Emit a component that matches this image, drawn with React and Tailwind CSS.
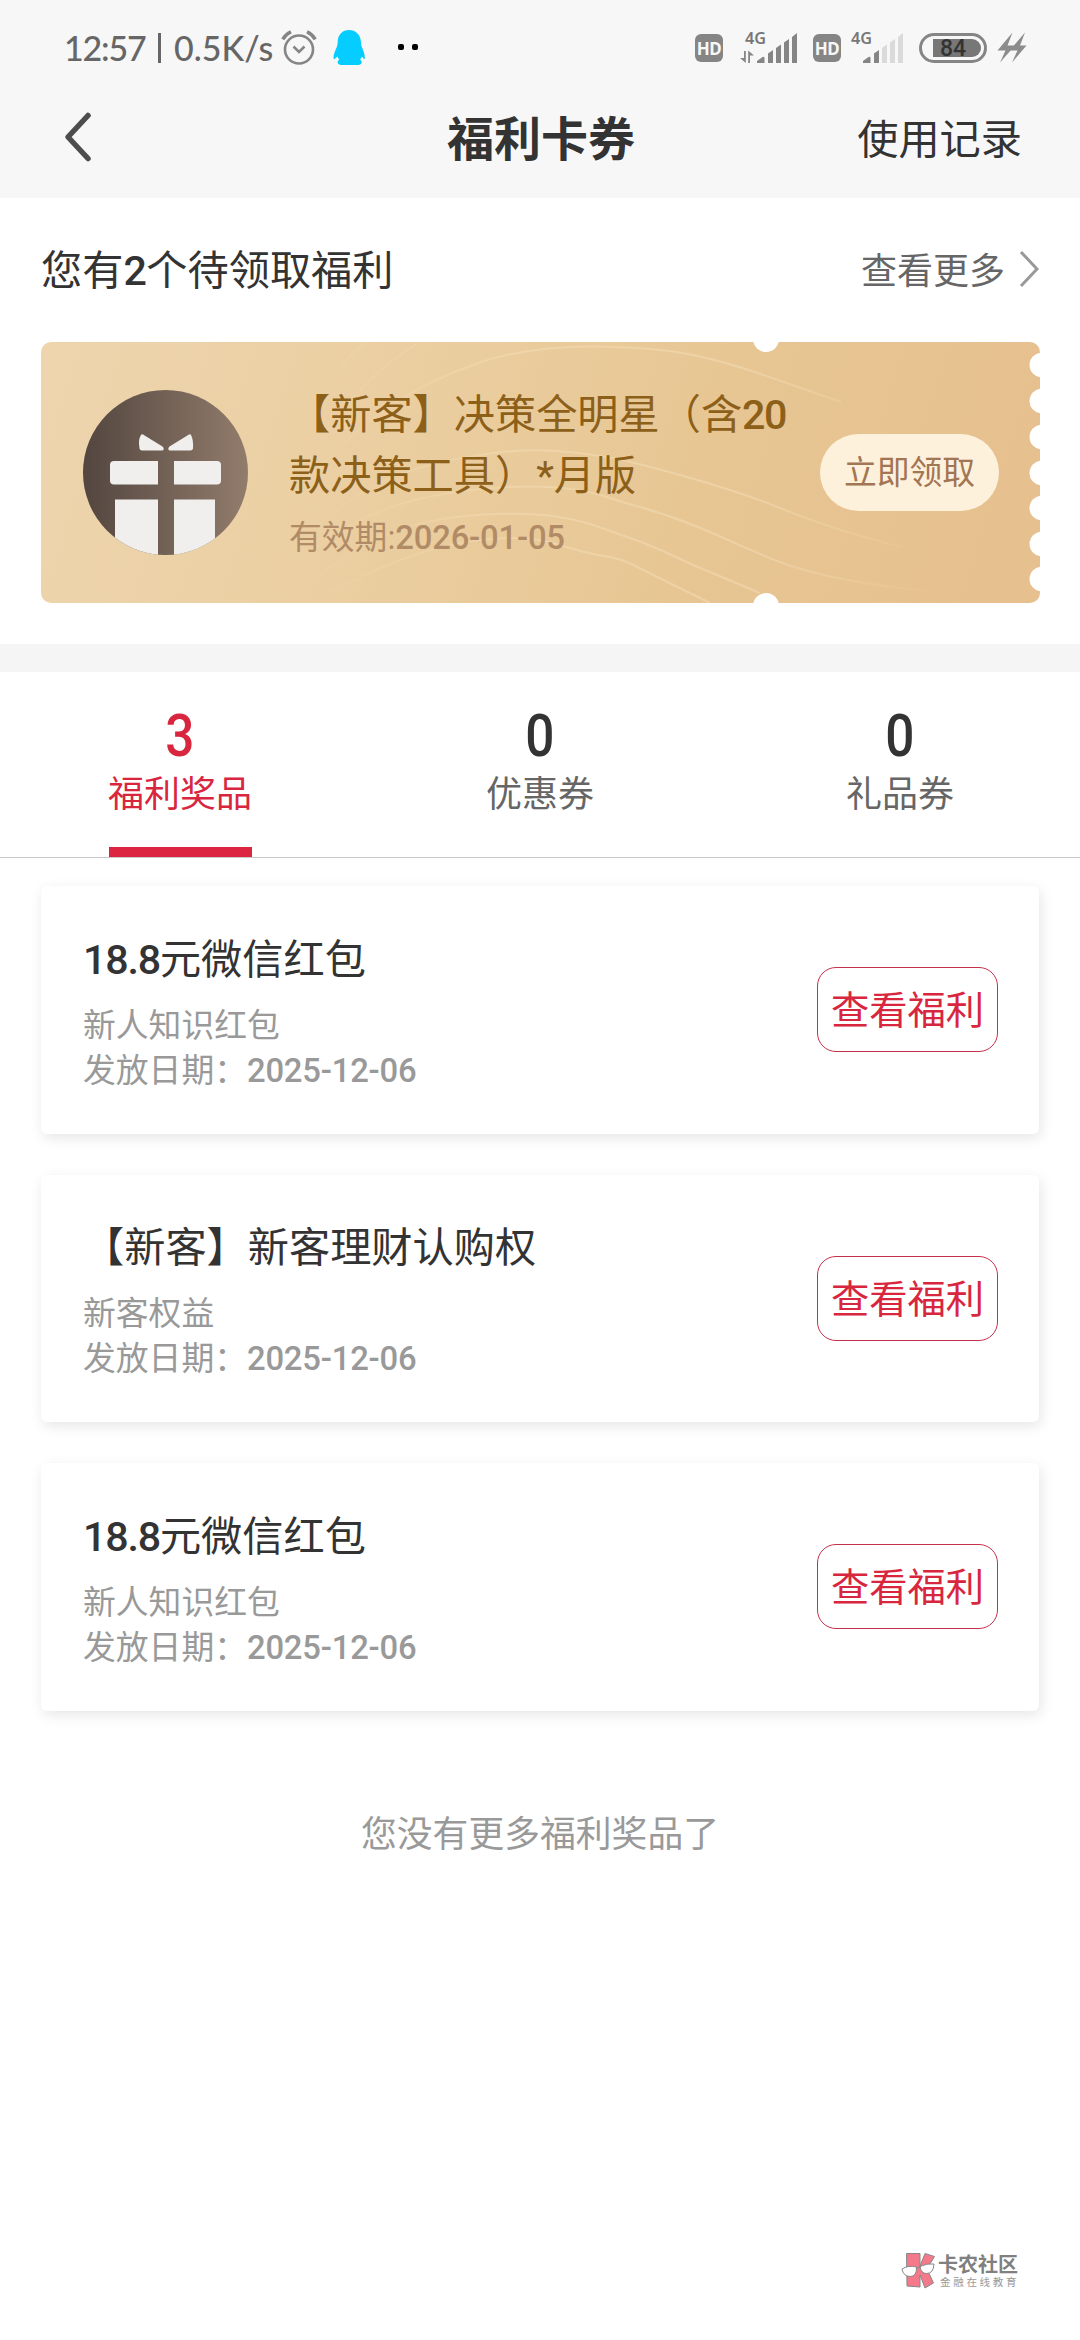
import React from "react";

const prizes = [
  { id: 1, amount: "18.8", title: "元微信红包", source: "新人知识红包", date: "2025-12-06" },
  { id: 2, amount: "", title: "【新客】新客理财认购权", source: "新客权益", date: "2025-12-06" },
  { id: 3, amount: "18.8", title: "元微信红包", source: "新人知识红包", date: "2025-12-06" },
];

const tabs = [
  { label: "福利奖品", count: 3, active: true },
  { label: "优惠券", count: 0, active: false },
  { label: "礼品券", count: 0, active: false },
];

const EDGE_NOTCHES = [23, 59, 95, 131, 166, 202, 237];

const HdBadge = () => (
  <div className="w-7 h-7 rounded-[6px] bg-[#858585] text-[#f7f7f7] text-[17px] leading-[30px] font-bold text-center tracking-[-0.5px] font-['Noto_Sans',sans-serif]">
    HD
  </div>
);

const Signal = ({ strength, arrows }) => (
  <svg width="62" height="54" viewBox="0 -10 62 54" className="block">
    <text x="5" y="13.5" fontSize="15.5" fontWeight="600" fontFamily="Noto Sans, sans-serif" fill="#777" textLength="21" lengthAdjust="spacingAndGlyphs">4G</text>
    {arrows && (
      <g fill="#858585">
        <path d="M4 21h1.8v12L0 28h4z" />
        <path d="M8.2 33H10V25.600h4L8.200 20.600z" />
      </g>
    )}
    {[
      "M17 33v-2l5.5-4q2-1 2 1v5z",
      "M28 33V23.500l5-3.500v13z",
      "M36 33V18l5-3.500V33z",
      "M44 33V12.500L49 9v24z",
      "M52 33V7l5-4v30z",
    ].map((d, i) => (
      <path key={d} d={d} fill={i < strength ? "#858585" : "#dadada"} />
    ))}
  </svg>
);

const StatusBar = () => (
  <div className="h-[92px] pl-[64px] pr-[53px] flex items-center justify-between">
    <div className="flex items-center pt-1">
      <div className="w-[210px] flex items-center text-[34px] leading-[40px] font-medium text-[#666] font-['Lato',sans-serif] whitespace-pre">
        <span className="w-[84px] tracking-[-1.2px]">12:57</span>
        <span className="w-[3px] h-[30px] ml-[10px] mr-[13px] bg-[#666]" />
        <span>0.5K/s</span>
      </div>
      <svg width="36" height="36" viewBox="0 0 36 36" fill="none" stroke="#858585" strokeWidth="2.600" className="ml-[7px]">
        <circle cx="18" cy="19.500" r="14" />
        <path d="M12.500 16.500l5.500 5.500 5.500-5.500" />
        <path d="M1.800 9.300Q4.500 4.500 10 1.800M34.200 9.300Q31.500 4.500 26 1.800" strokeWidth="3.500" />
      </svg>
      <svg width="32" height="36" viewBox="0 0 32 36" className="ml-[16px]" fill="#06cdff">
        <path d="M16 0C9.500 0 5 4.500 4.700 11.500c0 2-.3 3-.7 5C2.500 20 .5 24 .5 27.500c0 1.800.8 2 1.800 1l2.200-2c.4 1.300 1 2.400 1.800 3.300-1 .7-1.600 1.400-1.600 2.300 0 1.600.6 2.300 2.300 2.300V35h19.500v-.6c1.500 0 2.200-.8 2.200-2.300 0-.9-.6-1.600-1.600-2.300.8-.9 1.400-2 1.800-3.300l1.500 2c.8 1 1.400.7 1.400-1 0-3.500-1.600-7.500-3.200-11-.4-2-.6-3-.7-5C27.500 4.500 22.500 0 16 0z" />
      </svg>
      <div className="ml-[33px] flex gap-2 pb-[2px]">
        <span className="w-[6px] h-[6px] rounded-[2px] bg-black" />
        <span className="w-[6px] h-[6px] rounded-[2px] bg-black" />
      </div>
    </div>

    <div className="flex items-center pt-1">
      <HdBadge />
      <div className="ml-[17px] mb-[2px]"><Signal strength={5} arrows /></div>
      <div className="ml-[11px]"><HdBadge /></div>
      <div className="ml-[5px] mb-[2px]"><Signal strength={2} /></div>
      <div className="ml-[11px] w-[68px] h-[30px] rounded-full border-[3px] border-[#858585] p-[3px] pl-[11px]">
        <div className="h-[18px] w-[48px] rounded-l-[2px] rounded-r-full bg-[#777] text-[#333] text-[23px] leading-[19px] font-medium pl-[7px] font-['Roboto',sans-serif]">
          84
        </div>
      </div>
      <svg width="30" height="32" viewBox="0 0 30 32" fill="#8c8c8c" className="ml-[10px]">
        <path d="M15.500 .5L.5 18.500h8L3 30.500l15-17h-7.500z" />
        <path d="M28 .5L12.500 18.500h8L15 30.500l14.500-17H23z" />
      </svg>
    </div>
  </div>
);

const GiftIcon = () => (
  <svg width="165" height="165" viewBox="0 0 165 165" className="block shrink-0">
    <defs>
      <linearGradient id="giftBg" x1="0" x2="1" y1="0" y2="0">
        <stop offset="0" stopColor="#53463f" />
        <stop offset="1" stopColor="#927c6c" />
      </linearGradient>
      <clipPath id="giftClip">
        <circle cx="82.500" cy="82.500" r="82.500" />
      </clipPath>
    </defs>
    <g clipPath="url(#giftClip)">
      <rect width="165" height="165" fill="url(#giftBg)" />
      <g fill="#f0efee">
        <path d="M60 44.500q-1.500-1-2.200.8Q55 50 56.500 58.500q.4 2 2.500 2h20.500q2.500-1.500 0-4z" />
        <path d="M106 44.500q1.500-1 2.200.8 2.300 5 1.800 13.200-.4 2-2.500 2H86.500q-2.500-1.500 0-4z" />
        <path d="M31 71h44v23.500H31q-4 0-4-4V75q0-4 4-4z" />
        <path d="M91 71h43q4 0 4 4v15.500q0 4-4 4H91z" />
        <path d="M32 109.500h43V165H32zM91 109.500h41V165H91z" />
      </g>
    </g>
  </svg>
);

const CouponBackground = () => (
  <svg width="999" height="261" viewBox="0 0 999 261" className="absolute inset-0">
    <defs>
      <linearGradient id="couponBg" x1="0" x2="1" y1="0" y2="0.080">
        <stop offset="0" stopColor="#eed5ae" />
        <stop offset="0.350" stopColor="#ebcfa2" />
        <stop offset="0.700" stopColor="#e7c693" />
        <stop offset="1" stopColor="#e6c18f" />
      </linearGradient>
      <linearGradient id="waveFade" gradientUnits="userSpaceOnUse" x1="240" x2="900" y1="0" y2="0">
        <stop offset="0" stopColor="#f3dcb5" stopOpacity="0" />
        <stop offset="0.350" stopColor="#f3dcb5" stopOpacity="0.550" />
        <stop offset="0.700" stopColor="#f3dcb5" stopOpacity="0.550" />
        <stop offset="1" stopColor="#f3dcb5" stopOpacity="0" />
      </linearGradient>
    </defs>
    <rect width="999" height="261" rx="10" fill="url(#couponBg)" />
    <g fill="none" stroke="url(#waveFade)" strokeWidth="2">
      <path d="M250 160C320 70 386 38 440 20S560 2 620 8 740 40 800 60" />
      <path d="M250 90Q290 30 325 0M280 100Q320 35 376 2" />
      <path d="M270 190C330 130 400 118 452 111S560 112 602 123 700 150 739 166 820 195 860 205" />
      <path d="M270 210C330 160 400 150 452 146S540 146 569 156 610 166 652 183 700 205 739 220 830 244 900 250" />
      <path d="M270 240C320 200 350 188 386 180S500 165 552 183 610 203 652 223L719 251" />
      <path d="M290 250C400 190 480 190 519 203S570 213 586 220L669 261" />
    </g>
    <g fill="#fff">
      <circle cx="725" cy="-3" r="13" />
      <circle cx="725" cy="264" r="13" />
      {EDGE_NOTCHES.map((cy) => (
        <circle key={cy} cx="1001" cy={cy} r="12.500" />
      ))}
    </g>
  </svg>
);

const Coupon = () => (
  <div className="relative h-[261px] mx-[41px] pl-[42px] pr-[40px] flex items-center">
    <CouponBackground />
    <div className="relative flex items-center w-full">
      <GiftIcon />
      <div className="ml-[41px] w-[530px] pt-[3px] flex flex-col">
        <p className="text-[41.200px] leading-[61px] text-[#8d601a] whitespace-nowrap">
          【新客】决策全明星（含<span className="font-medium tracking-[-1.500px]">20</span>
          <br />
          款决策工具）*月版
        </p>
        <p className="mt-[6px] text-[32.800px] leading-[50px] text-[#b18b66]">
          有效期:<span className="font-medium tracking-[-0.200px]">2026-01-05</span>
        </p>
      </div>
      <button className="ml-auto w-[179px] h-[77px] pt-[3px] rounded-full bg-[#fef1db] text-[32.800px] text-[#a27554]">
        立即领取
      </button>
    </div>
  </div>
);

const Tab = ({ label, count, active }) => (
  <div className={active ? "flex-1 flex flex-col items-center text-[#d9263f]" : "flex-1 flex flex-col items-center text-[#666]"}>
    <span className={active ? "mt-[29px] text-[59px] leading-[70px] font-medium scale-x-[0.870]" : "mt-[29px] text-[59px] leading-[70px] font-medium scale-x-[0.870] text-[#333]"}>
      {count}
    </span>
    <span className="text-[36px] leading-[49px]">{label}</span>
    {active && <span className="mt-auto w-[143px] h-[10px] bg-[#dc2540]" />}
  </div>
);

const PrizeCard = ({ prize }) => (
  <div className="h-[247.500px] pl-[42px] pr-[41px] flex items-center justify-between rounded-[6px] bg-white shadow-[2px_4px_14px_rgba(0,0,0,0.1)]">
    <div className="pt-[4px]">
      <h3 className="text-[41.200px] leading-[60px] text-[#333]">
        {prize.amount && <span className="font-medium tracking-[-1.200px]">{prize.amount}</span>}
        {prize.title}
      </h3>
      <p className="mt-[14px] text-[32.800px] leading-[45px] text-[#999]">{prize.source}</p>
      <p className="text-[32.800px] leading-[45px] text-[#999]">
        发放日期：<span className="font-medium tracking-[-0.200px]">{prize.date}</span>
      </p>
    </div>
    <button className="w-[181px] h-[85px] pt-[2px] rounded-[19px] border border-[#c5304c] text-[38.300px] text-[#d9263f] whitespace-nowrap">
      查看福利
    </button>
  </div>
);

const CommunityLogo = () => (
  <div className="flex items-center">
    <svg width="36" height="38" viewBox="0 0 36 38" stroke="#888" strokeWidth="1" className="block">
      <path d="M5.500 1.500H19V14l5-12.500 9.500 3L26 17l6.500 14-8.500 5-5-13v12L6 34z" fill="#f4798a" />
      <path d="M1 17q6-4 14.500-2 .5 9.500-6.500 9.500-6.500 0-8-7.500zM19 14.500q7-3.500 14-2.500-.5 9.500-7.500 9.500-5.500 0-6.500-7z" fill="#fff" />
      <path d="M15.500 16.500l3.500-1.500" fill="none" />
    </svg>
    <div className="ml-[1px] w-[81px] pt-[2px]">
      <p className="text-[20px] leading-[21px] font-bold text-[#808080]">卡农社区</p>
      <p className="ml-[2px] text-[10.500px] leading-[14px] tracking-[2.700px] text-[#999] whitespace-nowrap">金融在线教育</p>
    </div>
  </div>
);

const App = () => {
  return (
    <div className="w-[1080px] h-[2340px] flex flex-col bg-white overflow-hidden font-['Roboto','Noto_Sans_CJK_SC',sans-serif]">
      {/* HEADER */}
      <header className="h-[198px] bg-[#f7f7f7]">
        <StatusBar />
        <div className="h-[94px] pl-[60px] pr-[58px] grid grid-cols-3 items-center">
          <svg width="36" height="56" viewBox="0 0 36 56" fill="none" stroke="#4d4d4d" strokeWidth="5.500" strokeLinecap="round" strokeLinejoin="round" className="mb-[5px]">
            <path d="M28 6.500L8 28l20 21.500" />
          </svg>
          <h1 className="pt-[3px] text-[47px] font-bold text-center text-[#333]">福利卡券</h1>
          <span className="pt-[3px] text-[41.200px] text-right text-[#333]">使用记录</span>
        </div>
      </header>

      {/* PENDING BENEFITS */}
      <section className="h-[446px]">
        <div className="h-[144px] px-[41px] flex items-center justify-between">
          <h2 className="pt-[4px] text-[41.200px] text-[#333]">
            您有<span className="font-medium tracking-[-0.500px]">2</span>个待领取福利
          </h2>
          <div className="flex items-center text-[36px] text-[#666]">
            <span className="pt-[4px]">查看更多</span>
            <svg width="20" height="38" viewBox="0 0 20 38" fill="none" stroke="#999" strokeWidth="3" className="ml-[14px] mb-[3px]">
              <path d="M2 2l16 17L2 36" />
            </svg>
          </div>
        </div>
        <Coupon />
      </section>

      <div className="h-[28px] bg-[#f5f5f5]" />

      {/* TABS */}
      <nav className="h-[186px] flex border-b border-[#c8c8c8]">
        {tabs.map((tab) => (
          <Tab key={tab.label} {...tab} />
        ))}
      </nav>

      {/* PRIZE LIST */}
      <section className="pt-[28px] px-[41px] flex flex-col gap-[41px]">
        {prizes.map((prize) => (
          <PrizeCard key={prize.id} prize={prize} />
        ))}
      </section>

      <p className="mt-[94px] text-center text-[35.800px] leading-[60px] text-[#999]">您没有更多福利奖品了</p>

      <footer className="mt-auto pb-[50px] pr-[61px] flex justify-end">
        <CommunityLogo />
      </footer>
    </div>
  );
};

export default App;
